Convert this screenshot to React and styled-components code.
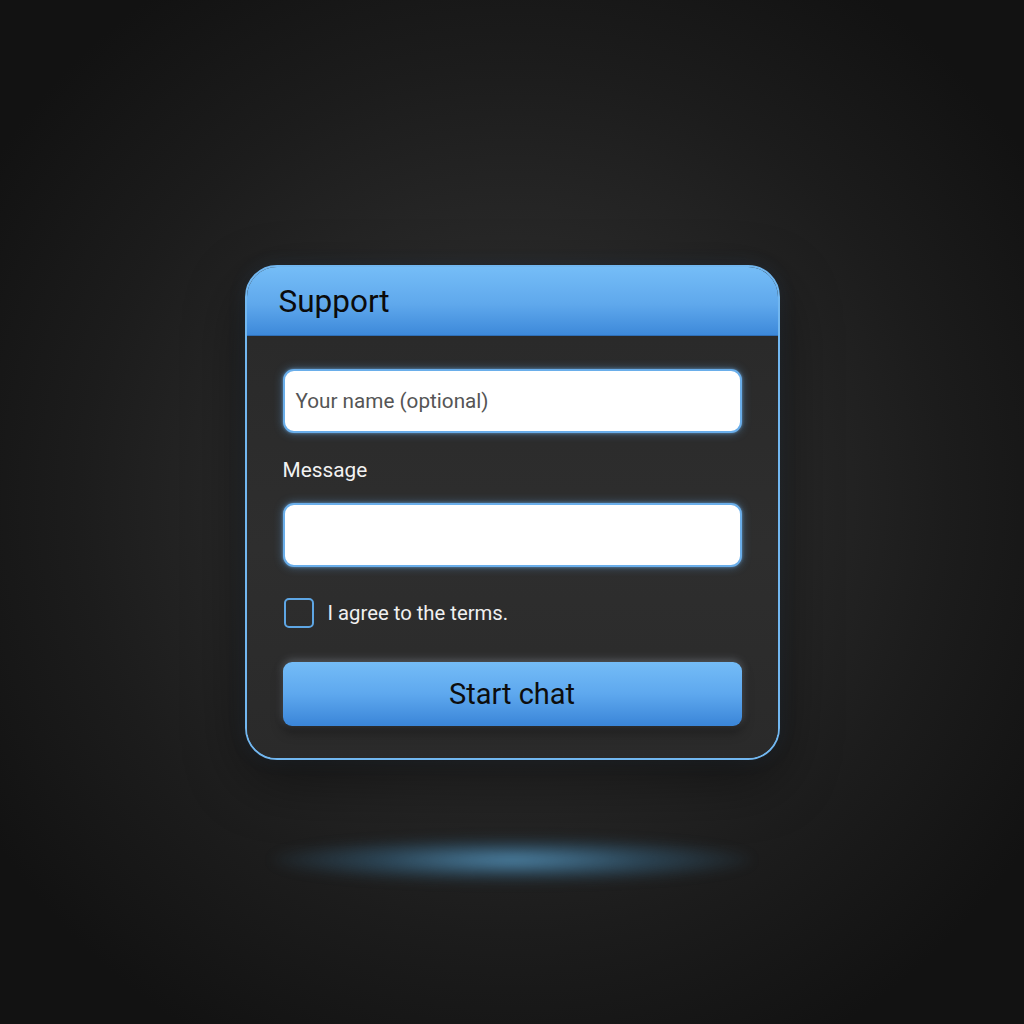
import React from "react";
import styled, { createGlobalStyle } from "styled-components";

const Global = createGlobalStyle`
  html, body { margin: 0; padding: 0; background: #151515; }
  * { box-sizing: border-box; }
`;

const Page = styled.div`
  width: 1024px;
  height: 1024px;
  overflow: hidden;
  display: flex;
  flex-direction: column;
  align-items: center;
  padding-top: 265px;
  font-family: Roboto, "Liberation Sans", sans-serif;
  background: radial-gradient(ellipse 620px 620px at 512px 500px, #343434 0%, #2a2a2a 35%, #1c1c1c 70%, #121212 100%);
`;

const Card = styled.div`
  width: 535px;
  height: 495px;
  border: 2px solid #72b7f0;
  border-radius: 32px;
  background: #2b2b2b;
  overflow: hidden;
  display: flex;
  flex-direction: column;
  box-shadow: 0 20px 60px rgba(0, 0, 0, 0.45), 0 0 18px rgba(80, 150, 220, 0.12);
`;

const Header = styled.div`
  height: 69px;
  flex: none;
  display: flex;
  align-items: center;
  padding: 0 0 0 32px;
  background: linear-gradient(180deg, #75bdf7 0%, #5fa8ec 55%, #3d89da 100%);
  border-bottom: 1px solid #2f6fb7;
`;

const Title = styled.h1`
  margin: 0;
  font-size: 31.5px;
  font-weight: 400;
  color: #0b0b0b;
`;

const Body = styled.div`
  flex: 1;
  display: flex;
  flex-direction: column;
  padding: 33px 36px 0 36px;
  background: linear-gradient(180deg, #2a2a2a 0%, #2e2e2e 50%, #2a2a2a 100%);
`;

const Field = styled.div`
  width: 459px;
  height: 64px;
  border-radius: 11px;
  border: 2px solid #6aaeea;
  background: #ffffff;
  display: flex;
  align-items: center;
  padding: 0 11px;
  box-shadow: 0 0 10px rgba(100, 170, 235, 0.45), 0 0 3px rgba(130, 190, 245, 0.6);
  font-size: 20.7px;
  color: #555555;
  margin-top: ${(p) => p.$mt || 0}px;
`;

const Label = styled.div`
  margin-top: 25px;
  font-size: 20.8px;
  color: #f2f2f2;
  line-height: 25px;
`;

const CheckRow = styled.label`
  margin-top: 31px;
  display: flex;
  align-items: center;
  gap: 14px;
  height: 30px;
`;

const Box = styled.span`
  width: 30px;
  height: 30px;
  border: 2.5px solid #5ea6e4;
  border-radius: 5px;
  margin-left: 1px;
`;

const CheckText = styled.span`
  font-size: 20.3px;
  color: #f0f0f0;
`;

const Button = styled.button`
  margin-top: 34px;
  width: 459px;
  height: 64px;
  border: none;
  border-radius: 9px;
  background: linear-gradient(180deg, #74bcf7 0%, #5ea8ee 50%, #3a85d8 100%);
  font-family: Roboto, "Liberation Sans", sans-serif;
  font-size: 29px;
  color: #0d0d0d;
  box-shadow: 0 -2px 8px rgba(220, 235, 255, 0.25), 0 6px 12px rgba(0, 0, 0, 0.35);
`;

const Glow = styled.div`
  margin-top: 78px;
  width: 480px;
  height: 44px;
  border-radius: 50%;
  background: radial-gradient(ellipse at center, rgba(90, 160, 205, 0.8) 0%, rgba(60, 120, 160, 0.42) 40%, rgba(40, 70, 90, 0) 75%);
  filter: blur(6px);
`;

export default function App() {
  return (
    <>
      <Global />
      <Page>
        <Card>
          <Header>
            <Title>Support</Title>
          </Header>
          <Body>
            <Field>Your name (optional)</Field>
            <Label>Message</Label>
            <Field $mt={20} />
            <CheckRow>
              <Box />
              <CheckText>I agree to the terms.</CheckText>
            </CheckRow>
            <Button>Start chat</Button>
          </Body>
        </Card>
        <Glow />
      </Page>
    </>
  );
}
